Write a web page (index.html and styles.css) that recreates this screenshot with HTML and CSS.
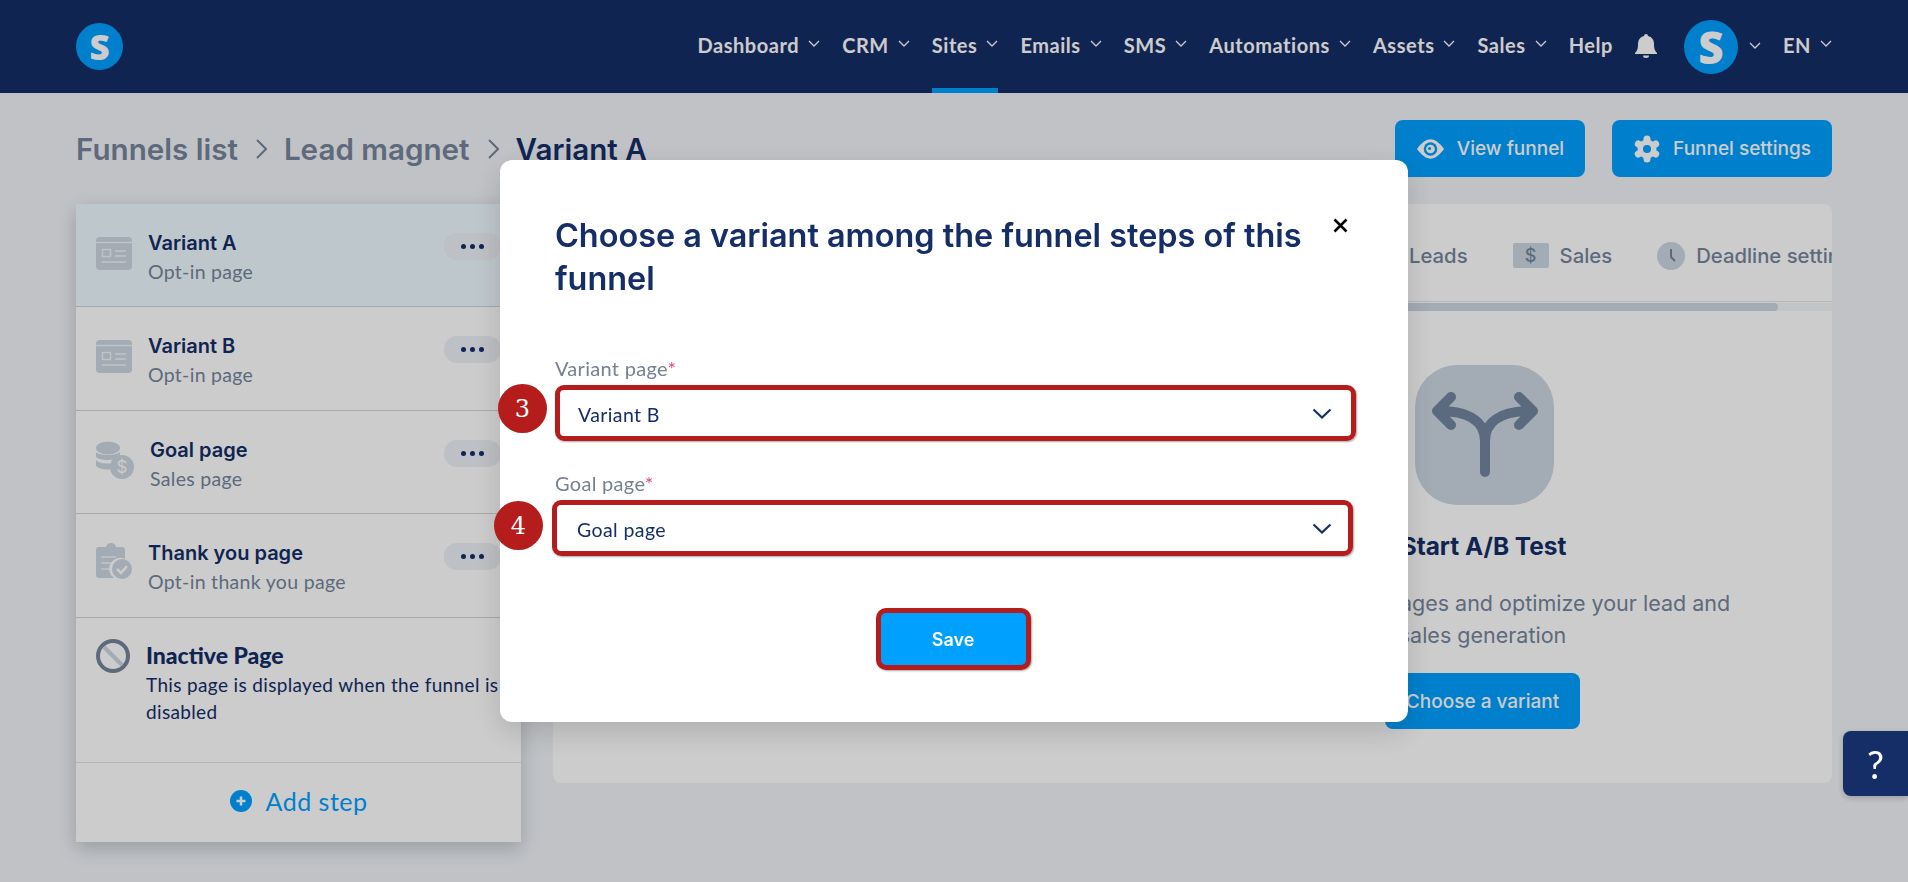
FILE: index.html
```html
<!DOCTYPE html>
<html lang="en">
<head>
    <meta charset="UTF-8">
    <meta name="viewport" content="width=device-width, initial-scale=1.0">
    <title>Funnel - Variant A</title>
    <link rel="stylesheet" href="styles.css">
</head>
<body>
    <header class="topbar">
        <div class="logo">S</div>
        <nav class="nav">
            <a class="nav-item">Dashboard <svg class="chev" viewBox="0 0 12 7"><path d="M1 1l5 5 5-5"/></svg></a>
            <a class="nav-item">CRM <svg class="chev" viewBox="0 0 12 7"><path d="M1 1l5 5 5-5"/></svg></a>
            <a class="nav-item active">Sites <svg class="chev" viewBox="0 0 12 7"><path d="M1 1l5 5 5-5"/></svg></a>
            <a class="nav-item">Emails <svg class="chev" viewBox="0 0 12 7"><path d="M1 1l5 5 5-5"/></svg></a>
            <a class="nav-item">SMS <svg class="chev" viewBox="0 0 12 7"><path d="M1 1l5 5 5-5"/></svg></a>
            <a class="nav-item">Automations <svg class="chev" viewBox="0 0 12 7"><path d="M1 1l5 5 5-5"/></svg></a>
            <a class="nav-item">Assets <svg class="chev" viewBox="0 0 12 7"><path d="M1 1l5 5 5-5"/></svg></a>
            <a class="nav-item">Sales <svg class="chev" viewBox="0 0 12 7"><path d="M1 1l5 5 5-5"/></svg></a>
            <a class="nav-item">Help</a>
            <svg class="bell" viewBox="0 0 22 24"><path d="M11 0a2 2 0 0 1 2 2c4 1 6 4 6 8 0 5 1 7 3 9v1H0v-1c2-2 3-4 3-9 0-4 2-7 6-8a2 2 0 0 1 2-2z"/><path d="M8 21.5h6a3 2.5 0 0 1-6 0z"/></svg>
            <div class="avatar-group">
                <div class="avatar">S</div>
                <svg class="chev" viewBox="0 0 12 7"><path d="M1 1l5 5 5-5"/></svg>
            </div>
            <a class="nav-item lang">EN <svg class="chev" viewBox="0 0 12 7"><path d="M1 1l5 5 5-5"/></svg></a>
        </nav>
    </header>

    <main class="page">
        <div class="page-head">
            <div class="breadcrumb">
                <span>Funnels list</span>
                <svg class="crumb-sep" viewBox="0 0 12 22"><path d="M2 2l9 9-9 9"/></svg>
                <span>Lead magnet</span>
                <svg class="crumb-sep" viewBox="0 0 12 22"><path d="M2 2l9 9-9 9"/></svg>
                <span class="crumb-current">Variant A</span>
            </div>
            <div class="head-actions">
                <button class="btn-primary">
                    <svg class="btn-icon" viewBox="0 0 30 20"><path class="light" d="M1 10C6 3 11 0 15 0s9 3 14 10c-5 7-10 10-14 10S6 17 1 10z"/><circle class="hole" cx="15" cy="10" r="7"/><circle class="light" cx="15" cy="10" r="4.5"/><circle class="hole" cx="14" cy="9.5" r="1.6"/></svg>
                    View funnel
                </button>
                <button class="btn-primary">
                    <svg class="btn-icon gear" viewBox="0 0 28 28"><path class="teeth" d="M14 4v20M5.3 9l17.4 10M5.3 19L22.700 9"/><circle class="light" cx="14" cy="14" r="9.500"/><circle class="hole" cx="14" cy="14" r="4"/></svg>
                    Funnel settings
                </button>
            </div>
        </div>

        <div class="content">
            <aside class="sidebar">
                <div class="step selected">
                    <svg class="step-icon" viewBox="0 0 36 33"><rect class="ic-fill" width="36" height="33" rx="4"/><path class="ic-line" d="M0 5.500h36M19 14h11M19 19h11M6 25h24"/><rect class="ic-line" x="6.500" y="12.500" width="8" height="7"/></svg>
                    <div class="step-text">
                        <div class="step-title">Variant A</div>
                        <div class="step-sub">Opt-in page</div>
                    </div>
                    <div class="dots"><i></i><i></i><i></i></div>
                </div>
                <div class="step">
                    <svg class="step-icon" viewBox="0 0 36 33"><rect class="ic-fill" width="36" height="33" rx="4"/><path class="ic-line" d="M0 5.500h36M19 14h11M19 19h11M6 25h24"/><rect class="ic-line" x="6.500" y="12.500" width="8" height="7"/></svg>
                    <div class="step-text">
                        <div class="step-title">Variant B</div>
                        <div class="step-sub">Opt-in page</div>
                    </div>
                    <div class="dots"><i></i><i></i><i></i></div>
                </div>
                <div class="step">
                    <svg class="step-icon wide" viewBox="0 0 38 38"><ellipse class="ic-fill" cx="12" cy="7" rx="12" ry="6.500"/><path class="ic-fill" d="M0 11c3 4 20 4 24 0v5c-4 4-21 4-24 0zM0 19c3 4 14 4 17 3l-1 6c-6 1-13 0-16-3z"/><circle class="ic-fill" cx="26" cy="26" r="12"/><text class="ic-dollar" x="26" y="32">$</text></svg>
                    <div class="step-text">
                        <div class="step-title">Goal page</div>
                        <div class="step-sub">Sales page</div>
                    </div>
                    <div class="dots"><i></i><i></i><i></i></div>
                </div>
                <div class="step">
                    <svg class="step-icon tall" viewBox="0 0 36 36"><path class="ic-fill" d="M3 4h7a5 4 0 0 1 10 0h6a3 3 0 0 1 3 3v9a11 11 0 0 0-11 19H3a3 3 0 0 1-3-3V7a3 3 0 0 1 3-3z"/><path class="ic-line" d="M5 14h15M5 20h11M5 26h9"/><circle class="ic-fill" cx="26" cy="26" r="10"/><path class="ic-check" d="M21 26l4 4 6-7"/></svg>
                    <div class="step-text">
                        <div class="step-title">Thank you page</div>
                        <div class="step-sub">Opt-in thank you page</div>
                    </div>
                    <div class="dots"><i></i><i></i><i></i></div>
                </div>
                <div class="inactive">
                    <svg class="inactive-icon" viewBox="0 0 34 34"><path class="slash" d="M8 8l18 18"/><circle class="ring" cx="17" cy="17" r="15"/></svg>
                    <div>
                        <div class="inactive-title">Inactive Page</div>
                        <div class="inactive-desc">This page is displayed when the funnel is disabled</div>
                    </div>
                </div>
                <div class="add-step">
                    <svg class="add-icon" viewBox="0 0 22 22"><circle cx="11" cy="11" r="11"/><path d="M11 6.500v9M6.500 11h9"/></svg>
                    Add step
                </div>
            </aside>

            <section class="panel">
                <div class="tabs">
                    <div class="tab">Leads</div>
                    <div class="tab"><span class="tab-dollar">$</span>Sales</div>
                    <div class="tab">
                        <svg class="tab-clock" viewBox="0 0 28 28"><circle cx="14" cy="14" r="14"/><path d="M14 7v8l4 4"/></svg>
                        Deadline settings
                    </div>
                </div>
                <div class="scrolltrack"><div class="scrollthumb"></div></div>
                <div class="ab-body">
                    <div class="ab-icon">
                        <svg viewBox="0 0 139 140"><path d="M70 107V76C70 58 56 46 24 46M70 76C70 58 84 46 116 46M36 32L22 46l14 14M104 32l14 14-14 14"/></svg>
                    </div>
                    <h2 class="ab-title">Start A/B Test</h2>
                    <p class="ab-desc">Tests different pages and optimize your lead and<br>sales generation</p>
                    <button class="btn-primary btn-choose">Choose a variant</button>
                </div>
            </section>
        </div>
    </main>

    <div class="overlay">
        <div class="modal">
            <svg class="modal-close" viewBox="0 0 15 15"><path d="M1.500 1.500l12 12M13.500 1.500l-12 12"/></svg>
            <h1 class="modal-title">Choose a variant among the funnel steps of this funnel</h1>

            <div class="field">
                <label class="field-label">Variant page<span class="req">*</span></label>
                <div class="select">Variant B
                    <svg class="select-chev" viewBox="0 0 20 11"><path d="M1.500 1.500l8.500 8 8.500-8"/></svg>
                </div>
                <span class="badge badge-3">3</span>
            </div>

            <div class="field">
                <label class="field-label">Goal page<span class="req">*</span></label>
                <div class="select select-goal">Goal page
                    <svg class="select-chev" viewBox="0 0 20 11"><path d="M1.500 1.500l8.500 8 8.500-8"/></svg>
                </div>
                <span class="badge badge-4">4</span>
            </div>

            <div class="modal-foot">
                <button class="btn-save">Save</button>
            </div>
        </div>
    </div>

    <div class="help-tab">?</div>
</body>
</html>
```

FILE: styles.css
```css
* {
    box-sizing: border-box;
}

body {
    margin: 0;
    height: 882px;
    overflow: hidden;
    background-color: #f0f3f8;
    font-family: 'Inter', 'Liberation Sans', sans-serif;
    color: #152e67;
}

svg {
    display: block;
    flex-shrink: 0;
}

button {
    font-family: inherit;
    border: none;
}

/* top bar */
.topbar {
    height: 93px;
    padding: 0 76px;
    background-color: #152e67;
    display: flex;
    justify-content: space-between;
    align-items: center;
}

.logo,
.avatar {
    border-radius: 50%;
    background-color: #00a0ff;
    color: #fff;
    font-family: 'Open Sans', sans-serif;
    font-weight: 800;
    display: flex;
    align-items: center;
    justify-content: center;
}

.logo {
    width: 47px;
    height: 47px;
    font-size: 35px;
}

.avatar {
    width: 54px;
    height: 54px;
    font-size: 44px;
}

.nav {
    display: flex;
    align-items: center;
    gap: 22px;
    height: 93px;
}

.nav-item {
    height: 93px;
    padding-top: 1px;
    border-bottom: 5px solid transparent;
    display: flex;
    align-items: center;
    gap: 9px;
    color: #fff;
    font-family: 'Lato', sans-serif;
    font-size: 20px;
    font-weight: 700;
    letter-spacing: 0.55px;
}

.nav-item.active {
    border-bottom-color: #00a0ff;
}

.chev {
    width: 12px;
    height: 7px;
    margin-top: -3px;
    fill: none;
    stroke: #fff;
    stroke-width: 1.3;
}

.bell {
    width: 22px;
    height: 24px;
    fill: #fff;
    margin-top: -2px;
}

.avatar-group {
    margin-left: 5px;
    display: flex;
    align-items: center;
    gap: 11px;
}

/* page */
.page {
    padding: 27px 76px 0;
}

.page-head {
    height: 57px;
    margin-bottom: 27px;
    display: flex;
    justify-content: space-between;
    align-items: center;
}

.breadcrumb {
    display: flex;
    align-items: center;
    gap: 17px;
    font-size: 29.6px;
    font-weight: 600;
    color: #76859b;
}

.crumb-sep {
    width: 12px;
    height: 22px;
    fill: none;
    stroke: #76859b;
    stroke-width: 2;
}

.crumb-current {
    color: #152e67;
}

.head-actions {
    display: flex;
    gap: 27px;
}

.btn-primary {
    height: 57px;
    padding: 0 21px;
    border-radius: 8px;
    background-color: #00a0ff;
    color: #fff;
    font-size: 19px;
    font-weight: 500;
    display: flex;
    align-items: center;
    gap: 12px;
}

.btn-icon {
    width: 29px;
    height: 20px;
}

.btn-icon.gear {
    width: 28px;
    height: 28px;
}

.light {
    fill: #fff;
}

.hole {
    fill: #00a0ff;
}

.teeth {
    fill: none;
    stroke: #fff;
    stroke-width: 7;
    stroke-linecap: round;
}

.content {
    display: flex;
    gap: 32px;
    align-items: flex-start;
}

/* steps column */
.sidebar {
    width: 445px;
    background-color: #fff;
    box-shadow: 0 6px 18px rgba(0,0,0,0.2);
}

.step {
    height: 103.4px;
    padding: 26px 20px 0;
    border-bottom: 1px solid #d4d4d6;
    display: flex;
    align-items: flex-start;
}

.step.selected {
    background-color: #eef9ff;
}

.step-icon {
    width: 36px;
    height: 33px;
    margin-top: 7px;
    margin-right: 16px;
}

.step-icon.wide {
    width: 38px;
    height: 38px;
    margin-top: 4px;
    margin-right: 16px;
}

.step-icon.tall {
    height: 36px;
    margin-top: 3px;
}

.ic-fill {
    fill: #ccd6e2;
}

.ic-line {
    fill: none;
    stroke: #fff;
    stroke-width: 1.4;
    opacity: 0.75;
}

.ic-check {
    fill: none;
    stroke: #fff;
    stroke-width: 2.5;
}

.ic-dollar {
    fill: #fff;
    font-family: 'Inter', sans-serif;
    font-size: 17px;
    text-anchor: middle;
}

.step-title {
    font-size: 20px;
    font-weight: 600;
    line-height: 26px;
    color: #152e67;
}

.step-sub {
    margin-top: 3px;
    font-family: 'Lato', sans-serif;
    font-size: 19.5px;
    line-height: 26px;
    letter-spacing: 0.3px;
    color: #76859b;
}

.dots {
    width: 57px;
    height: 27px;
    margin-top: 3px;
    margin-left: auto;
    border-radius: 13px;
    background-color: #edf0f5;
    display: flex;
    align-items: center;
    justify-content: center;
    gap: 4px;
}

.dots i {
    width: 5px;
    height: 5px;
    border-radius: 50%;
    background-color: #152e67;
}

.inactive {
    height: 145px;
    padding: 21px 8px 0 20px;
    border-bottom: 1px solid #e3e3e5;
    display: flex;
    gap: 16px;
}

.inactive-icon {
    width: 34px;
    height: 34px;
    fill: none;
}

.ring {
    stroke: #76859b;
    stroke-width: 4;
}

.slash {
    stroke: #ccd6e2;
    stroke-width: 4;
}

.inactive-title {
    margin-top: 3px;
    font-family: 'Lato', sans-serif;
    font-size: 23px;
    font-weight: 900;
    line-height: 26px;
    color: #152e67;
}

.inactive-desc {
    margin-top: 3px;
    font-family: 'Lato', sans-serif;
    font-size: 19px;
    line-height: 27px;
    letter-spacing: 0.35px;
    color: #152e67;
}

.add-step {
    height: 79px;
    padding-bottom: 3px;
    display: flex;
    align-items: center;
    justify-content: center;
    gap: 14px;
    font-family: 'Lato', sans-serif;
    font-size: 25px;
    letter-spacing: 0.5px;
    color: #00a0ff;
}

.add-icon {
    width: 22px;
    height: 22px;
}

.add-icon circle {
    fill: #00a0ff;
}

.add-icon path {
    stroke: #fff;
    stroke-width: 2.5;
}

/* right panel */
.panel {
    flex: 1;
    height: 579px;
    min-width: 0;
    border-radius: 8px;
    background-color: #fff;
    overflow: hidden;
}

.tabs {
    height: 98px;
    padding: 6px 0 0 856px;
    border-bottom: 1px solid #e3e5e9;
    display: flex;
    align-items: center;
    gap: 45px;
    white-space: nowrap;
    font-size: 20.3px;
    font-weight: 500;
    color: #76859b;
}

.tab {
    display: flex;
    align-items: center;
    gap: 11px;
}

.tab-dollar {
    width: 36px;
    height: 25px;
    border-radius: 2px;
    background-color: #ccd6e2;
    color: #76859b;
    font-size: 18px;
    text-align: center;
    line-height: 25px;
}

.tab-clock {
    width: 28px;
    height: 28px;
}

.tab-clock circle {
    fill: #ccd6e2;
}

.tab-clock path {
    fill: none;
    stroke: #76859b;
    stroke-width: 2;
}

.scrolltrack {
    height: 8px;
    margin-top: 1px;
    background-color: #f4f5f7;
}

.scrollthumb {
    width: 1225px;
    height: 8px;
    border-radius: 4px;
    background-color: #ccd6e2;
}

.ab-body {
    padding: 54px 0 0 586px;
    display: flex;
    flex-direction: column;
    align-items: center;
}

.ab-icon {
    width: 139px;
    height: 140px;
    border-radius: 42px;
    background-color: #ccd6e2;
    margin-right: 2px;
}

.ab-icon path {
    fill: none;
    stroke: #73859f;
    stroke-width: 10;
    stroke-linecap: round;
    stroke-linejoin: round;
}

.ab-title {
    margin: 26px 4px 0 0;
    font-size: 24.4px;
    font-weight: 700;
    line-height: 30px;
    color: #152e67;
}

.ab-desc {
    margin: 26px 6px 0 0;
    white-space: nowrap;
    text-align: center;
    font-size: 21.5px;
    line-height: 32px;
    color: #76859b;
}

.btn-choose {
    height: 56px;
    margin-top: 22px;
    margin-right: 6px;
}

/* modal */
.overlay {
    position: fixed;
    top: 0;
    left: 0;
    right: 0;
    bottom: 0;
    background-color: rgba(0,0,0,0.2);
    display: flex;
    align-items: center;
    justify-content: center;
}

.modal {
    position: relative;
    width: 908px;
    height: 562px;
    padding: 54px 55px 0;
    border-radius: 12px;
    background-color: #fff;
    box-shadow: 0 10px 30px rgba(0,0,0,0.15);
}

.modal-close {
    position: absolute;
    top: 58px;
    right: 60px;
    width: 15px;
    height: 15px;
    fill: none;
    stroke: #000;
    stroke-width: 2.5;
}

.modal-title {
    width: 770px;
    margin: 0 0 56px;
    font-size: 32.4px;
    font-weight: 600;
    line-height: 43px;
    color: #152e67;
}

.field {
    position: relative;
    margin-bottom: 30px;
}

.field-label {
    display: block;
    height: 29px;
    font-family: 'Lato', sans-serif;
    font-size: 20px;
    line-height: 24px;
    letter-spacing: 0.3px;
    color: #76808f;
}

.req {
    color: #e8447a;
}

.select {
    width: 801px;
    height: 56px;
    padding: 3px 0 0 18px;
    border: 5px solid #b51c1c;
    border-radius: 9px;
    display: flex;
    align-items: center;
    justify-content: space-between;
    font-family: 'Lato', sans-serif;
    font-size: 19.5px;
    letter-spacing: 0.4px;
    color: #152e67;
    box-shadow: 1px 1px 2px rgba(0,0,0,0.35);
}

.select-goal {
    margin-left: -3px;
    padding-left: 20px;
}

.select-chev {
    width: 20px;
    height: 11px;
    margin: -3px 19px 0 0;
    fill: none;
    stroke: #152e67;
    stroke-width: 2.2;
}

.select-goal .select-chev {
    margin-right: 16px;
}

.badge {
    position: absolute;
    width: 49px;
    height: 49px;
    border-radius: 50%;
    background-color: #b51c1c;
    color: #fff;
    font-family: 'DejaVu Serif', serif;
    font-size: 24px;
    display: flex;
    align-items: center;
    justify-content: center;
}

.badge-3 {
    left: -57px;
    top: 28px;
}

.badge-4 {
    left: -61px;
    top: 30px;
}

.modal-foot {
    margin-top: 52px;
    display: flex;
    justify-content: center;
}

.btn-save {
    width: 155px;
    height: 62px;
    margin-right: 2px;
    border: 5px solid #b51c1c;
    border-radius: 10px;
    background-color: #00a0ff;
    color: #fff;
    font-size: 18px;
    font-weight: 600;
    box-shadow: 1px 1px 2px rgba(0,0,0,0.35);
}

.help-tab {
    position: fixed;
    top: 731px;
    right: 0;
    width: 65px;
    height: 65px;
    border-radius: 8px 0 0 8px;
    background-color: #152e67;
    color: #fff;
    font-family: 'Lato', sans-serif;
    font-size: 38px;
    display: flex;
    align-items: center;
    justify-content: center;
    box-shadow: 0 2px 6px rgba(0,0,0,0.2);
}
```
